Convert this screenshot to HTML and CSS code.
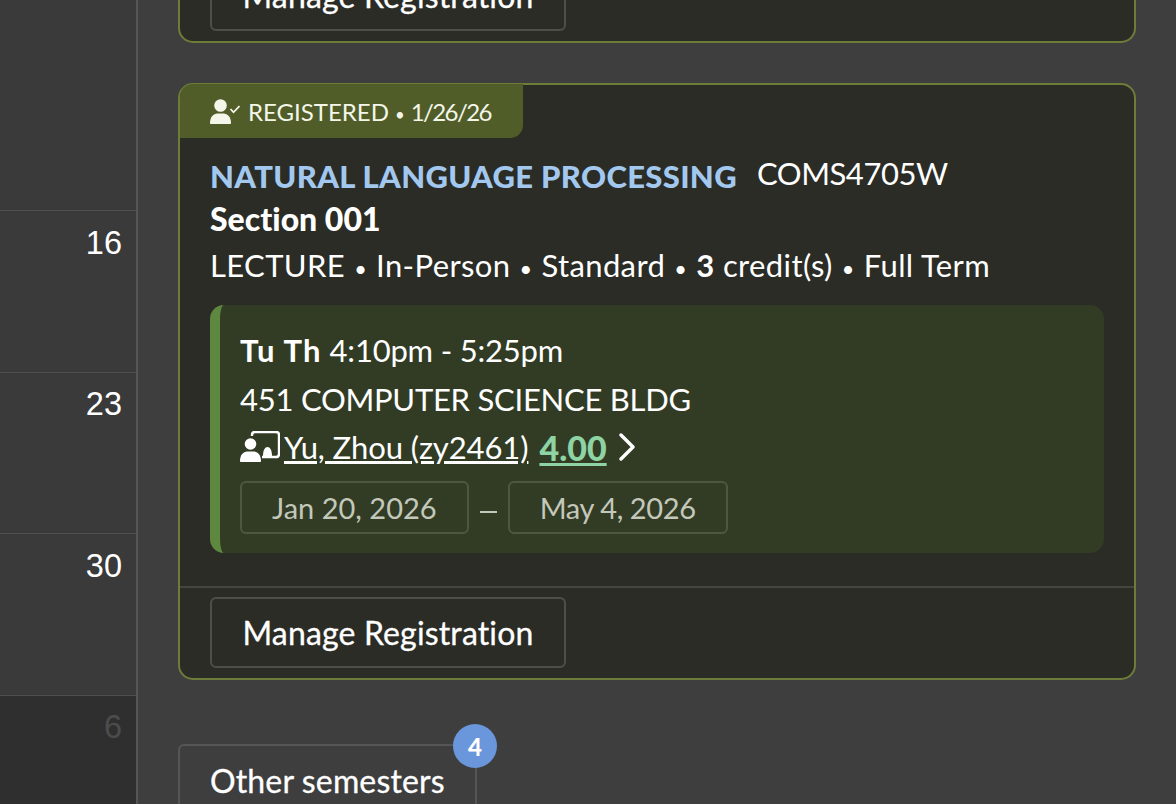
FILE: index.html
```html
<!DOCTYPE html>
<html lang="en">
<head>
<meta charset="utf-8">
<title>Schedule</title>
<link rel="stylesheet" href="styles.css">
</head>
<body>
<div class="page">
  <aside class="calendar">
    <div class="day day-first"></div>
    <div class="day"><span>16</span></div>
    <div class="day"><span>23</span></div>
    <div class="day"><span>30</span></div>
    <div class="day day-out"><span>6</span></div>
  </aside>
  <main class="main">
    <section class="card card-prev">
      <div class="card-foot">
        <button class="btn">Manage Registration</button>
      </div>
    </section>
    <section class="card card-main">
      <div class="status">
        <svg class="status-icon" viewBox="0 0 30 25" aria-hidden="true"><circle cx="10.500" cy="6.500" r="6.300" fill="#f4f6ea"/><path d="M0 24c0-6 3.500-9.500 7.500-9.500h6c4 0 7.500 3.500 7.500 9.500 0 .6-.4 1-1 1H1c-.6 0-1-.4-1-1z" fill="#f4f6ea"/><path d="M20.500 10l3 3.300L29.500 7" fill="none" stroke="#f4f6ea" stroke-width="1.800"/></svg>
        <span>REGISTERED<span class="sep">•</span><span class="status-date">1/26/26</span></span>
      </div>
      <div class="info">
        <div class="title-row"><a class="course">NATURAL LANGUAGE PROCESSING</a><span class="code">COMS4705W</span></div>
        <div class="section">Section 001</div>
        <div class="meta">LECTURE<span class="sep">•</span>In-Person<span class="sep">•</span>Standard<span class="sep">•</span><b>3</b> credit(s)<span class="sep">•</span>Full Term</div>
      </div>
      <div class="meeting">
        <div class="line"><b class="days">Tu Th</b> <span class="time">4:10pm - 5:25pm</span></div>
        <div class="line room">451 COMPUTER SCIENCE BLDG</div>
        <div class="line prof">
          <svg class="prof-icon" viewBox="0 0 40 32" aria-hidden="true"><circle cx="10.500" cy="13" r="5.800" fill="#fff"/><path d="M0 30c0-6 3.500-9.500 7-9.500h7c3.500 0 7 3.500 7 9.500 0 .6-.4 1-1 1H1c-.6 0-1-.4-1-1z" fill="#fff"/><path d="M12 5V4c0-1.700 1.300-3 3-3h21c1.700 0 3 1.300 3 3v19c0 1.700-1.300 3-3 3H22" fill="none" stroke="#fff" stroke-width="2.400"/><path d="M23 25c0-6 2-9 4.500-9s4.500 3 4.500 9z" fill="#fff"/></svg>
          <a class="prof-name">Yu, Zhou (zy2461)</a>
          <a class="rating">4.00</a>
          <svg class="chev" viewBox="0 0 16 28" aria-hidden="true"><path d="M2 2l12 12L2 26" fill="none" stroke="#fff" stroke-width="3.400" stroke-linecap="round" stroke-linejoin="round"/></svg>
        </div>
        <div class="dates">
          <span class="date">Jan 20, 2026</span>
          <span class="dash"></span>
          <span class="date date-end">May 4, 2026</span>
        </div>
      </div>
      <div class="card-foot">
        <button class="btn">Manage Registration</button>
      </div>
    </section>
    <div class="other">
      <button class="btn-other">Other semesters<span class="badge">4</span></button>
    </div>
  </main>
</div>
</body>
</html>
```
FILE: styles.css
```css
* { box-sizing: border-box; }
html, body { margin: 0; height: 100%; overflow: hidden; }
body { background: #3e3e3e; color: #fff; font-family: "Lato", "Open Sans", "Liberation Sans", sans-serif; font-variant-ligatures: none; }
.page { display: flex; height: 804px; overflow: hidden; }
.calendar { flex: 0 0 138px; border-right: 2px solid #555; background: #3a3a3a; display: flex; flex-direction: column; }
.day { height: 161.67px; flex: none; border-bottom: 1px solid #4f4f4f; display: flex; justify-content: flex-end; padding: 13.5px 14px 0 0; font-family: "Liberation Sans", sans-serif; font-size: 32.5px; line-height: 36px; }
.day-first { height: 211px; }
.day-out { background: #2f2f2f; color: #4c4c4c; border-bottom: none; height: 110px; padding-top: 13px; }
.main { flex: 1; padding: 0 40px; min-width: 0; }
.card { background: #2b2c26; border: 2px solid #6e7c3a; border-radius: 15px; }
.card-prev { margin-top: -49px; border-top: none; border-top-left-radius: 0; border-top-right-radius: 0; margin-bottom: 40px; }
.card-prev .card-foot { border-top: none; }
.card-main { margin-bottom: 64px; }
.status { width: 343px; height: 54px; background: #505d28; border-radius: 13px 0 13px 0; display: flex; align-items: center; gap: 8px; padding: 0 30px; font-size: 24px; color: #f4f6ea; white-space: nowrap; margin-top: -1px; }
.status-icon { width: 30px; height: 25px; flex: none; }
.status-date { letter-spacing: -1.6px; }
.sep { font-size: .7em; margin: 0 9px; }
.status .sep { margin: 0 6px; }
.info { padding: 19px 30px 0; }
.title-row { display: flex; align-items: flex-start; gap: 20px; height: 39px; white-space: nowrap; }
.course { color: #a3c8ef; font-weight: 900; font-size: 31px; letter-spacing: .33px; }
.code { font-size: 31px; letter-spacing: -.45px; margin-top: -3px; }
.section { font-weight: 900; font-size: 32px; line-height: 46px; }
.meta { font-size: 31px; line-height: 46px; letter-spacing: .38px; white-space: nowrap; }
.meeting { margin: 13px 30px 33px; background: #323c25; border-left: 10px solid #5e8740; border-radius: 14px; padding: 21px 20px 19px; }
.line { font-size: 31px; line-height: 49px; }
.days { letter-spacing: 1.2px; }
.time { letter-spacing: -.2px; }
.room { letter-spacing: -.25px; }
.prof { display: flex; align-items: center; height: 46px; }
.prof-icon { width: 40px; height: 32px; margin-right: 4px; flex: none; }
.prof-name { text-decoration: underline; letter-spacing: -.1px; }
.rating { margin-left: 11px; color: #8ed3a3; font-weight: 900; font-size: 34px; text-decoration: underline; }
.chev { width: 16px; height: 28px; margin-left: 12px; }
.dates { display: flex; align-items: center; margin-top: 11px; }
.date { height: 53px; padding: 0 30px; display: flex; align-items: center; border: 2px solid #4d5843; border-radius: 6px; color: #c4c8bb; font-size: 29px; white-space: nowrap; }
.date-end { letter-spacing: -.4px; }
.dash { width: 17px; height: 2px; background: #c4c8bb; margin: 8px 11px 0; }
.card-foot { border-top: 2px solid #44463f; padding: 9px 30px 10px; }
.btn { display: block; height: 71px; width: 356px; background: transparent; border: 2px solid #4f4f48; border-radius: 6px; color: #fff; font: inherit; font-size: 32px; letter-spacing: .15px; padding: 0; -webkit-text-stroke: .3px #fff; }
.other { display: flex; }
.btn-other { position: relative; height: 90px; width: 299px; background: transparent; border: 2px solid #555; border-radius: 6px; color: #fff; font: inherit; font-size: 32px; letter-spacing: .15px; text-align: left; padding: 0 30px 18px; white-space: nowrap; -webkit-text-stroke: .3px #fff; }
.badge { position: absolute; top: -22px; right: -22px; width: 44px; height: 44px; border-radius: 50%; background: #6a96dc; display: flex; align-items: center; justify-content: center; font-size: 24px; font-weight: 900; letter-spacing: 0; -webkit-text-stroke: 0; }
```
